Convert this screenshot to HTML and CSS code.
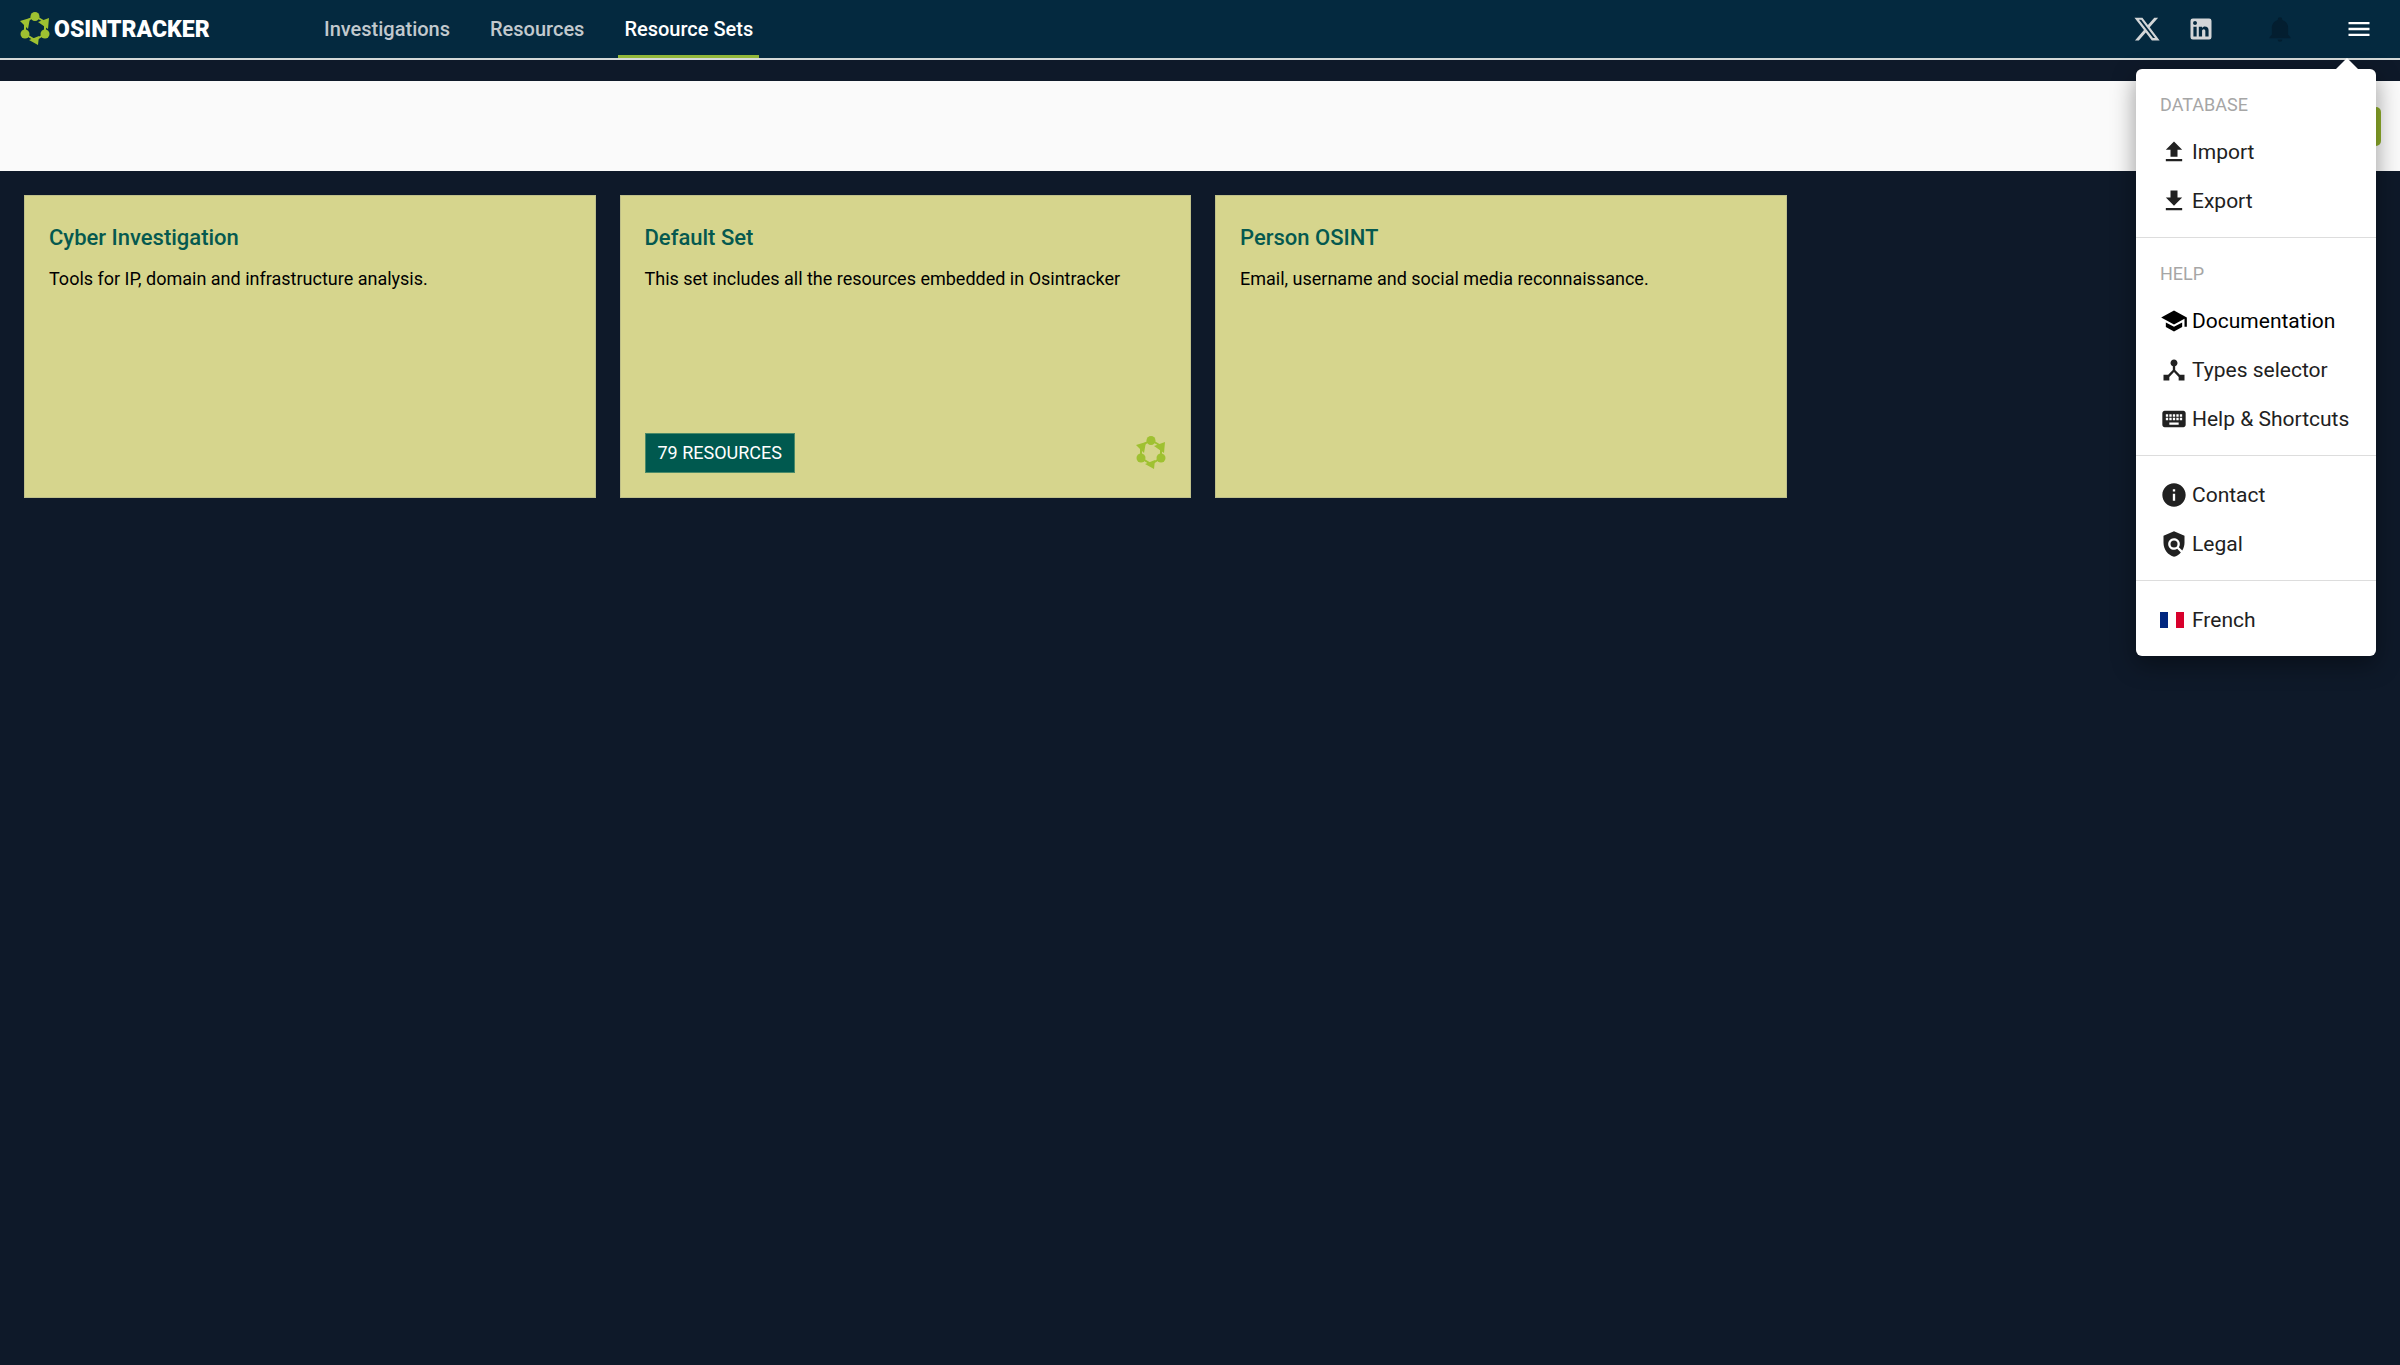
FILE: index.html
```html
<!DOCTYPE html>
<html lang="en">

<head>
    <meta charset="UTF-8" />
    <meta name="viewport" content="width=device-width, initial-scale=1.0" />
    <title>Osintracker</title>
    <link rel="stylesheet" href="styles.css">
</head>

<body>
    <!-- shared ring logo -->
    <svg class="sprite">
        <symbol id="ring" viewBox="0 0 30 34">
            <path d="M15 4 25 10V22L15 28 5 22V10z" fill="none" stroke="currentColor" stroke-width="2" />
            <circle cx="15" cy="4.5" r="4.5" />
            <circle cx="5" cy="22" r="4.5" />
            <circle cx="25" cy="22" r="4.5" />
            <path d="M0 9 10 6 8 17zM18 10 29 6 28 17zM9 28 19 24 18 33z" />
        </symbol>
    </svg>

    <header class="topbar">
        <a class="brand" href="#">
            <svg class="brand-icon"><use href="#ring" /></svg>
            <span>OSINTRACKER</span>
        </a>
        <nav class="tabs">
            <a href="#">Investigations</a>
            <a href="#">Resources</a>
            <a href="#" class="active">Resource Sets</a>
        </nav>
        <div class="actions">
            <a href="#" aria-label="X">
                <svg viewBox="0 0 24 24"><path d="M18.244 2.25h3.308l-7.227 8.26 8.502 11.24H16.17l-5.214-6.817L4.99 21.75H1.68l7.73-8.835L1.254 2.25H8.08l4.713 6.231zm-1.161 17.52h1.833L7.084 4.126H5.117z" /></svg>
            </a>
            <a href="#" aria-label="LinkedIn">
                <svg viewBox="0 0 24 24"><path d="M19 3a2 2 0 0 1 2 2v14a2 2 0 0 1-2 2H5a2 2 0 0 1-2-2V5a2 2 0 0 1 2-2h14m-.5 15.5v-5.3a3.26 3.26 0 0 0-3.26-3.26c-.85 0-1.84.52-2.32 1.3v-1.11h-2.79v8.37h2.79v-4.93c0-.77.62-1.4 1.39-1.4a1.4 1.4 0 0 1 1.4 1.4v4.93h2.79M6.88 8.56a1.68 1.68 0 0 0 1.68-1.68c0-.93-.75-1.69-1.68-1.69a1.69 1.69 0 0 0-1.69 1.69c0 .93.76 1.68 1.69 1.68m1.39 9.94v-8.37H5.5v8.37h2.77z" /></svg>
            </a>
            <button class="bell" aria-label="Notifications" disabled>
                <svg viewBox="0 0 24 24"><path d="M21 19v1H3v-1l2-2v-6c0-3.1 2.03-5.83 5-6.71V4a2 2 0 0 1 4 0v.29c2.97.88 5 3.61 5 6.71v6l2 2m-7 2a2 2 0 0 1-4 0" /></svg>
            </button>
            <button class="burger" aria-label="Menu">
                <svg viewBox="0 0 24 24"><path d="M3 6h18v2H3V6m0 5h18v2H3v-2m0 5h18v2H3v-2z" /></svg>
            </button>
        </div>

        <div class="menu">
            <section>
                <h2>DATABASE</h2>
                <button>
                    <svg viewBox="0 0 24 24"><path d="M9 16h6v-6h4l-7-7-7 7h4v6zm-4 2h14v2H5v-2z" /></svg>Import
                </button>
                <button>
                    <svg viewBox="0 0 24 24"><path d="M19 9h-4V3H9v6H5l7 7 7-7zM5 18v2h14v-2H5z" /></svg>Export
                </button>
            </section>
            <section>
                <h2>HELP</h2>
                <a href="#" class="doc">
                    <svg viewBox="0 0 24 24"><path d="M5 13.18v4L12 21l7-3.82v-4L12 17l-7-3.82zM12 3 1 9l11 6 9-4.91V17h2V9L12 3z" /></svg>Documentation
                </a>
                <button>
                    <svg viewBox="0 0 24 24"><path d="M17 16l-4-4V8.82C14.16 8.4 15 7.3 15 6c0-1.66-1.34-3-3-3S9 4.34 9 6c0 1.3.84 2.4 2 2.82V12l-4 4H3v5h5v-3.05l4-4.2 4 4.2V21h5v-5h-4z" /></svg>Types selector
                </button>
                <button>
                    <svg viewBox="0 0 24 24"><path d="M20 5H4c-1.1 0-1.99.9-1.99 2L2 17c0 1.1.9 2 2 2h16c1.1 0 2-.9 2-2V7c0-1.1-.9-2-2-2zm-9 3h2v2h-2V8zm0 3h2v2h-2v-2zM8 8h2v2H8V8zm0 3h2v2H8v-2zm-1 2H5v-2h2v2zm0-3H5V8h2v2zm9 7H8v-2h8v2zm0-4h-2v-2h2v2zm0-3h-2V8h2v2zm3 3h-2v-2h2v2zm0-3h-2V8h2v2z" /></svg>Help &amp; Shortcuts
                </button>
            </section>
            <section>
                <button>
                    <svg viewBox="0 0 24 24"><path d="M12 2C6.48 2 2 6.48 2 12s4.48 10 10 10 10-4.48 10-10S17.52 2 12 2zm1 15h-2v-6h2v6zm0-8h-2V7h2v2z" /></svg>Contact
                </button>
                <button>
                    <svg viewBox="0 0 24 24"><path d="M21 5l-9-4-9 4v6c0 5.55 3.84 10.74 9 12 2.3-.56 4.33-1.9 5.88-3.71l-3.12-3.12a5 5 0 1 1 1.41-1.41l2.9 2.9C20.29 15.69 21 13.38 21 11V5z" /><circle cx="12" cy="12" r="3" /></svg>Legal
                </button>
            </section>
            <section>
                <button>
                    <svg class="flag" viewBox="0 0 24 16"><path fill="#fff" d="M0 0h24v16H0z" /><path fill="#00267f" d="M0 0h8v16H0z" /><path fill="#d8002c" d="M16 0h8v16h-8z" /></svg>French
                </button>
            </section>
        </div>
    </header>

    <div class="toolbar">
        <button class="add" aria-label="Add a set"></button>
    </div>

    <main class="sets">
        <article class="card">
            <h3>Cyber Investigation</h3>
            <p>Tools for IP, domain and infrastructure analysis.</p>
        </article>
        <article class="card">
            <h3>Default Set</h3>
            <p>This set includes all the resources embedded in Osintracker</p>
            <div class="card-foot">
                <span class="count">79 RESOURCES</span>
                <svg class="card-icon"><use href="#ring" /></svg>
            </div>
        </article>
        <article class="card">
            <h3>Person OSINT</h3>
            <p>Email, username and social media reconnaissance.</p>
        </article>
    </main>
</body>

</html>
```
FILE: styles.css
```css
* {
    margin: 0;
    padding: 0;
    box-sizing: border-box;
}

body {
    min-height: 100vh;
    background: #0e1929;
    font-family: Roboto, "Liberation Sans", sans-serif;
    font-size: 18px;
    color: #000;
}

a {
    color: inherit;
    text-decoration: none;
}

button {
    border: none;
    background: none;
    font: inherit;
    color: inherit;
    cursor: pointer;
}

svg {
    fill: currentColor;
}

.sprite {
    display: none;
}

/* top bar */
.topbar {
    position: relative;
    display: flex;
    height: 60px;
    background: #04293f;
    border-bottom: 2px solid #d5d9d8;
}

.brand {
    display: flex;
    align-items: center;
    gap: 4px;
    width: 318px;
    padding-left: 20px;
    color: #fff;
    font-size: 23px;
    font-weight: 900;
}

.brand-icon {
    width: 30px;
    height: 34px;
    color: #9fc131;
}

.tabs {
    display: flex;
    gap: 28px;
}

.tabs a {
    display: flex;
    align-items: center;
    padding: 3px 6px 0;
    border-bottom: 3px solid transparent;
    font-size: 20px;
    font-weight: 500;
    color: #c2c9ce;
}

.tabs .active {
    color: #fff;
    border-bottom-color: #93b83a;
}

.actions {
    display: flex;
    align-items: center;
    margin-left: auto;
    padding-right: 14px;
    color: #d3d6d8;
}

.actions a,
.actions button {
    display: flex;
    justify-content: center;
    width: 54px;
}

.actions svg {
    width: 28px;
    height: 28px;
}

.actions .bell {
    width: 104px;
    color: #031e30;
}

.actions .burger {
    color: #fff;
}

/* drop-down menu */
.menu {
    position: absolute;
    top: 69px;
    right: 24px;
    z-index: 1;
    width: 240px;
    border-radius: 6px;
    background: #fff;
    box-shadow: 0 8px 24px rgba(0, 0, 0, 0.4);
    color: #212121;
}

.menu::before {
    content: "";
    position: absolute;
    top: -11px;
    right: 18px;
    border: 11px solid transparent;
    border-top: none;
    border-bottom-color: #fff;
}

.menu section {
    padding: 14px 24px 12px;
}

.menu section + section {
    border-top: 1px solid #ddd;
}

.menu h2 {
    font-size: 18px;
    font-weight: 400;
    line-height: 44px;
    color: #a6a6a6;
}

.menu button,
.menu a {
    display: flex;
    align-items: center;
    gap: 4px;
    width: 100%;
    height: 49px;
    font-size: 21px;
    white-space: nowrap;
}

.menu .doc {
    color: #000;
}

.menu svg {
    flex: none;
    width: 28px;
    height: 28px;
}

.menu .flag {
    width: 24px;
    height: 16px;
    margin-right: 4px;
}

/* page */
.toolbar {
    display: flex;
    align-items: center;
    justify-content: flex-end;
    height: 90px;
    margin-top: 21px;
    padding-right: 19px;
    background: #fafafa;
}

.add {
    width: 54px;
    height: 39px;
    border-radius: 5px;
    background: #8fae2b;
}

.sets {
    display: grid;
    grid-template-columns: repeat(4, 1fr);
    gap: 24px;
    padding: 24px 18px 24px 24px;
}

.card {
    display: flex;
    flex-direction: column;
    min-height: 303px;
    padding: 24px;
    border: 1px solid #bfc08a;
    background: #d6d58d;
}

.card h3 {
    font-size: 22px;
    font-weight: 500;
    line-height: 36px;
    color: #05594f;
}

.card p {
    margin-top: 11px;
    font-size: 18px;
    line-height: 24px;
}

.card-foot {
    display: flex;
    align-items: center;
    justify-content: space-between;
    margin-top: auto;
}

.count {
    padding: 0 12px;
    border: 1px solid #4a8a68;
    background: #00594f;
    font-size: 18px;
    line-height: 38px;
    color: #fff;
}

.card-icon {
    width: 30px;
    height: 34px;
    color: #9fc131;
}
```
